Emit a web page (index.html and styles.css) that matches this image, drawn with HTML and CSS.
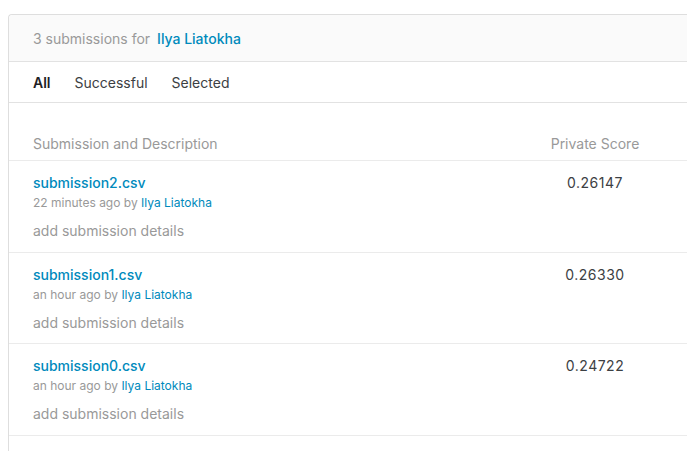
FILE: index.html
```html
<!DOCTYPE html>
<html>
<head>
<meta charset="utf-8">
<link rel="stylesheet" href="styles.css">
</head>
<body>
<div class="card">
  <div class="card-header">3 submissions for <a class="user strong" href="#">Ilya Liatokha</a></div>
  <div class="tabs">
    <span class="tab active">All</span>
    <span class="tab">Successful</span>
    <span class="tab">Selected</span>
  </div>
  <div class="table">
    <div class="row head">
      <div class="col-main">Submission and Description</div>
      <div class="col-score">Private Score</div>
    </div>
    <div class="row">
      <div class="col-main">
        <a class="file" href="#">submission2.csv</a>
        <div class="meta">22 minutes ago by <a class="user" href="#">Ilya Liatokha</a></div>
        <div class="details">add submission details</div>
      </div>
      <div class="col-score score">0.26147</div>
    </div>
    <div class="row">
      <div class="col-main">
        <a class="file" href="#">submission1.csv</a>
        <div class="meta">an hour ago by <a class="user" href="#">Ilya Liatokha</a></div>
        <div class="details">add submission details</div>
      </div>
      <div class="col-score score">0.26330</div>
    </div>
    <div class="row">
      <div class="col-main">
        <a class="file" href="#">submission0.csv</a>
        <div class="meta">an hour ago by <a class="user" href="#">Ilya Liatokha</a></div>
        <div class="details">add submission details</div>
      </div>
      <div class="col-score score">0.24722</div>
    </div>
  </div>
</div>
</body>
</html>
```
FILE: styles.css
```css
html, body {
  margin: 0;
  padding: 0;
  background: #ffffff;
  overflow: hidden;
}
body {
  padding: 14px 0 0 8px;
  font-family: Inter, "Noto Sans", sans-serif;
  font-size: 14px;
  color: #3c4043;
}
a { text-decoration: none; }
.card {
  width: 720px;
  border: 1px solid #dedede;
  border-right: none;
  border-radius: 4px 0 0 0;
  background: #fff;
}
.card-header {
  height: 46px;
  display: flex;
  align-items: center;
  padding-left: 24px;
  background: #fafafa;
  border-bottom: 1px solid #e2e2e2;
  color: #999999;
  border-radius: 4px 0 0 0;
}
.card-header .user { margin-left: 7px; }
.user { color: #008abc; }
.strong { font-weight: 500; }
.tabs {
  height: 40px;
  display: flex;
  align-items: center;
  gap: 24px;
  padding-left: 24px;
  border-bottom: 1px solid #e2e2e2;
}
.tab { color: #3c4043; }
.tab.active { color: #202124; font-weight: 600; }
.table { padding: 31px 0 40px; }
.row {
  display: flex;
  border-bottom: 1px solid #ebebeb;
  padding: 12px 0 10.5px 24px;
}
.row.head {
  padding: 0 0 6px 24px;
  color: #999999;
  line-height: 20px;
}
.col-main {
  width: 502px;
  flex: none;
}
.col-score {
  width: 120px;
  text-align: center;
  flex: none;
}
.score {
  line-height: 20px;
  color: #3c4043;
  font-weight: 400;
  letter-spacing: 0.5px;
}
.file {
  display: block;
  color: #008abc;
  font-weight: 500;
  line-height: 20px;
}
.meta {
  font-size: 12px;
  color: #999999;
  line-height: 16px;
  margin-top: 2px;
}
.details {
  color: #999999;
  line-height: 20px;
  margin-top: 10px;
}
```
